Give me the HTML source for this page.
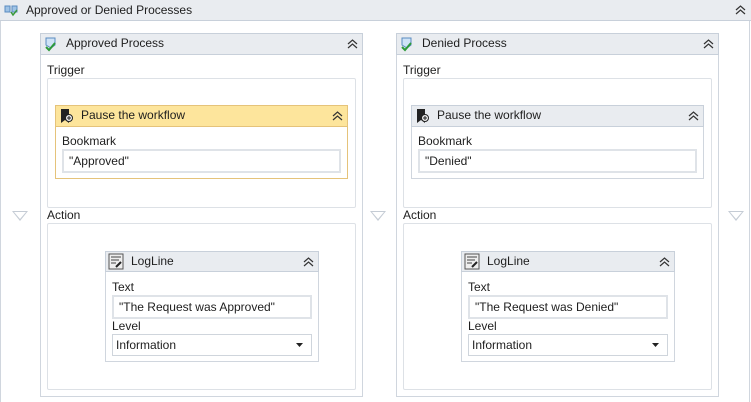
<!DOCTYPE html><html><head><style>
body{margin:0;width:751px;height:402px;background:#fff;font-family:"Liberation Sans",sans-serif;font-size:12px;color:#1e1e1e;position:relative;overflow:hidden}
div{position:absolute;box-sizing:border-box}
.hdr{background:#e9ecf0;border:1px solid #c8d0da}
.box{border:1px solid #d0d6de;background:#fff}
.sub{border:1px solid #dde1e6;border-radius:2px;background:#fff}
.inp{border:2px solid #dfe3e8;background:#fff;padding:3px 0 0 5px;font-size:12px}
.tri{width:0;height:0;border-left:8px solid transparent;border-right:8px solid transparent;border-top:10px solid #c5ccd5}
.tri:after{content:"";position:absolute;left:-6px;top:-9px;border-left:6px solid transparent;border-right:6px solid transparent;border-top:7.5px solid #fff}
</style></head><body>
<svg width="0" height="0" style="position:absolute"><defs><symbol id="ch" viewBox="0 0 11 10"><path d="M1 5l4.5-4 4.5 4M1 9l4.5-4 4.5 4" stroke="#333" stroke-width="1.2" fill="none"/></symbol></defs></svg>
<div class="hdr" style="left:0;top:0;width:751px;height:21px;border-width:0 0 1px 0"></div>
<div style="left:0;top:21px;width:1px;height:381px;background:#d0d6de"></div>
<div style="left:749px;top:21px;width:1px;height:381px;background:#d0d6de"></div>
<div style="left:4px;top:4px;width:14px;height:13px"><svg width="14" height="13"><rect x="1" y="2" width="5" height="6" fill="#9fc3e6" stroke="#5a8bc0"/><rect x="8" y="2" width="5" height="6" fill="#9fc3e6" stroke="#5a8bc0"/><path d="M7 8l2 3 4-5" stroke="#3a9a3a" stroke-width="1.5" fill="none"/></svg></div>
<div style="left:26px;top:3px">Approved or Denied Processes</div>
<svg style="position:absolute;left:735px;top:5px" width="11" height="10"><use href="#ch"/></svg>
<div class="tri" style="left:12px;top:211px"></div>
<div class="tri" style="left:370px;top:211px"></div>
<div class="tri" style="left:728px;top:211px"></div>

<!-- Approved -->
<div class="box" style="left:40px;top:33px;width:323px;height:364px"></div>
<div class="hdr" style="left:40px;top:33px;width:323px;height:22px"></div>
<div style="left:44px;top:36px"><svg width="14" height="16"><path d="M2 2h9v7l-4 3-5-3z" fill="#cfe3f6" stroke="#5a8bc0"/><path d="M2 11l3 3 6-7" stroke="#2e9a3a" stroke-width="2" fill="none"/></svg></div>
<div style="left:66px;top:36px">Approved Process</div>
<svg style="position:absolute;left:347px;top:39px" width="11" height="10"><use href="#ch"/></svg>
<div style="left:47px;top:63px">Trigger</div>
<div class="sub" style="left:47px;top:78px;width:309px;height:130px"></div>
<div style="left:55px;top:105px;width:293px;height:74px;border:1px solid #e5c37a;background:#fff"></div>
<div style="left:55px;top:105px;width:293px;height:22px;background:#fde59c;border:1px solid #e5c37a"></div>
<div style="left:59px;top:108px"><svg width="14" height="16"><path d="M2 1h8v14l-4-3-4 3z" fill="#222"/><circle cx="10" cy="10" r="3.5" fill="#eee" stroke="#222"/><path d="M10 8v4M8 10h4" stroke="#222"/></svg></div>
<div style="left:81px;top:108px">Pause the workflow</div>
<svg style="position:absolute;left:332px;top:111px" width="11" height="10"><use href="#ch"/></svg>
<div style="left:62px;top:134px">Bookmark</div>
<div class="inp" style="left:62px;top:149px;width:279px;height:24px">"Approved"</div>
<div style="left:47px;top:208px">Action</div>
<div class="sub" style="left:47px;top:223px;width:309px;height:167px"></div>
<div style="left:105px;top:251px;width:214px;height:111px;border:1px solid #d0d6de;background:#fff"></div>
<div class="hdr" style="left:105px;top:251px;width:214px;height:21px"></div>
<div style="left:108px;top:253px"><svg width="16" height="17"><rect x="1" y="1" width="14" height="15" fill="#eee" stroke="#555"/><path d="M3 4h10M3 7h8M3 10h5" stroke="#444"/><path d="M8 14l5-5" stroke="#222" stroke-width="2"/></svg></div>
<div style="left:131px;top:254px">LogLine</div>
<svg style="position:absolute;left:303px;top:257px" width="11" height="10"><use href="#ch"/></svg>
<div style="left:112px;top:280px">Text</div>
<div class="inp" style="left:112px;top:295px;width:200px;height:24px">"The Request was Approved"</div>
<div style="left:112px;top:319px">Level</div>
<div style="left:112px;top:334px;width:200px;height:22px;border:1px solid #cfd5dc;padding:3px 0 0 3px">Information<svg style="position:absolute;right:8px;top:8px" width="7" height="4"><path d="M0 0h7L3.5 4z" fill="#222"/></svg></div>

<!-- Denied -->
<div class="box" style="left:396px;top:33px;width:323px;height:364px"></div>
<div class="hdr" style="left:396px;top:33px;width:323px;height:22px"></div>
<div style="left:400px;top:36px"><svg width="14" height="16"><path d="M2 2h9v7l-4 3-5-3z" fill="#cfe3f6" stroke="#5a8bc0"/><path d="M2 11l3 3 6-7" stroke="#2e9a3a" stroke-width="2" fill="none"/></svg></div>
<div style="left:422px;top:36px">Denied Process</div>
<svg style="position:absolute;left:703px;top:39px" width="11" height="10"><use href="#ch"/></svg>
<div style="left:403px;top:63px">Trigger</div>
<div class="sub" style="left:403px;top:78px;width:309px;height:130px"></div>
<div style="left:411px;top:105px;width:293px;height:74px;border:1px solid #d0d6de;background:#fff"></div>
<div class="hdr" style="left:411px;top:105px;width:293px;height:22px"></div>
<div style="left:415px;top:108px"><svg width="14" height="16"><path d="M2 1h8v14l-4-3-4 3z" fill="#222"/><circle cx="10" cy="10" r="3.5" fill="#eee" stroke="#222"/><path d="M10 8v4M8 10h4" stroke="#222"/></svg></div>
<div style="left:437px;top:108px">Pause the workflow</div>
<svg style="position:absolute;left:688px;top:111px" width="11" height="10"><use href="#ch"/></svg>
<div style="left:418px;top:134px">Bookmark</div>
<div class="inp" style="left:418px;top:149px;width:279px;height:24px">"Denied"</div>
<div style="left:403px;top:208px">Action</div>
<div class="sub" style="left:403px;top:223px;width:309px;height:167px"></div>
<div style="left:461px;top:251px;width:214px;height:111px;border:1px solid #d0d6de;background:#fff"></div>
<div class="hdr" style="left:461px;top:251px;width:214px;height:21px"></div>
<div style="left:464px;top:253px"><svg width="16" height="17"><rect x="1" y="1" width="14" height="15" fill="#eee" stroke="#555"/><path d="M3 4h10M3 7h8M3 10h5" stroke="#444"/><path d="M8 14l5-5" stroke="#222" stroke-width="2"/></svg></div>
<div style="left:487px;top:254px">LogLine</div>
<svg style="position:absolute;left:659px;top:257px" width="11" height="10"><use href="#ch"/></svg>
<div style="left:468px;top:280px">Text</div>
<div class="inp" style="left:468px;top:295px;width:200px;height:24px">"The Request was Denied"</div>
<div style="left:468px;top:319px">Level</div>
<div style="left:468px;top:334px;width:200px;height:22px;border:1px solid #cfd5dc;padding:3px 0 0 3px">Information<svg style="position:absolute;right:8px;top:8px" width="7" height="4"><path d="M0 0h7L3.5 4z" fill="#222"/></svg></div>
</body></html>
